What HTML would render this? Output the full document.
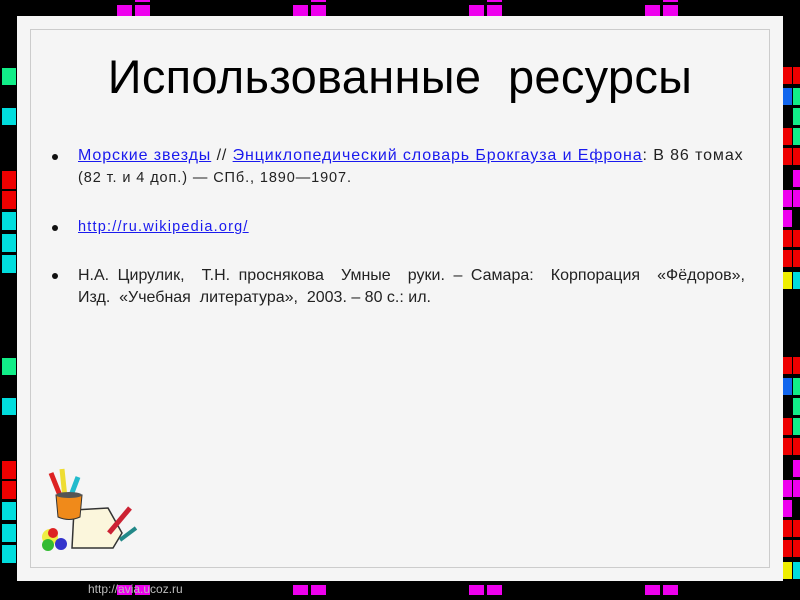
<!DOCTYPE html>
<html><head><meta charset="utf-8"><style>
body{margin:0;width:800px;height:600px;background:#000;position:relative;overflow:hidden;font-family:"Liberation Sans",sans-serif}
.s{position:absolute}
#panel{position:absolute;left:17px;top:16px;width:766px;height:565px;background:#f5f5f5}
#inner{position:absolute;left:30px;top:29px;width:738px;height:537px;border:1px solid #ccc}
h1{position:absolute;left:0;width:800px;top:49px;margin:0;text-align:center;font-weight:normal;font-size:47px;color:#000;letter-spacing:0.3px}
.li{position:absolute;left:78px;width:667px;font-size:16px;color:#222;line-height:22px}
.j{text-align:justify;text-align-last:justify}
.b{position:absolute;left:52px;width:6px;height:6px;border-radius:50%;background:#111}
a{color:#1a1aee;text-decoration:underline}
</style></head><body>
<div id="panel"></div><div id="inner"></div>
<div id="sq"></div>
<h1>Использованные&nbsp; ресурсы</h1>
<div class="b" style="top:154px"></div>
<div class="li" style="top:145px"><div style="letter-spacing:0.9px"><a>Морские звезды</a> // <a>Энциклопедический словарь Брокгауза и Ефрона</a>: В 86 томах</div><div style="font-size:14.5px;letter-spacing:0.9px">(82 т. и 4 доп.) — СПб., 1890—1907.</div></div>
<div class="b" style="top:225px"></div>
<div class="li" style="top:216px;font-size:14.5px;letter-spacing:1.2px"><a>http://ru.wikipedia.org/</a></div>
<div class="b" style="top:273px"></div>
<div class="li" style="top:265px"><div class="j">Н.А. Цирулик,&nbsp; Т.Н. проснякова&nbsp; Умные&nbsp; руки. – Самара:&nbsp; Корпорация&nbsp; «Фёдоров»,</div><div>Изд.&nbsp; «Учебная&nbsp; литература»,&nbsp; 2003. – 80 с.: ил.</div></div>
<svg class="s" style="left:36px;top:465px" width="110" height="100" viewBox="0 0 110 100">
<polygon points="38,45 72,43 86,68 77,83 36,83" fill="#fbf6dc" stroke="#333" stroke-width="1.5"/>
<line x1="15" y1="8" x2="25" y2="33" stroke="#d22" stroke-width="5"/>
<line x1="26" y1="4" x2="29" y2="33" stroke="#ed3" stroke-width="5"/>
<line x1="42" y1="12" x2="34" y2="33" stroke="#2bc" stroke-width="5"/>
<path d="M20,30 L46,30 L44,52 Q33,57 22,52 Z" fill="#f08a1a" stroke="#333"/>
<ellipse cx="33" cy="30" rx="13" ry="3" fill="#555"/>
<line x1="73" y1="68" x2="94" y2="43" stroke="#c23" stroke-width="5"/>
<line x1="84" y1="75" x2="100" y2="63" stroke="#288" stroke-width="4"/>
<circle cx="14" cy="72" r="8" fill="#ee4"/>
<circle cx="17" cy="68" r="5" fill="#d22"/>
<circle cx="12" cy="80" r="6" fill="#3b3"/>
<circle cx="25" cy="79" r="6" fill="#33c"/>
</svg>
<div class="s" style="left:88px;top:582px;font-size:12px;color:#bbb">http://avia.ucoz.ru</div>
<script>
var h='';function sq(x,y,w,hh,c){h+='<div class="s" style="left:'+x+'px;top:'+y+'px;width:'+w+'px;height:'+hh+'px;background:'+c+'"></div>';}
var R='#e00',G='#1e8',C='#0dd',M='#e0e',B='#16e',Y='#ee0';
for(var p=0;p<2;p++){var o=p*290;
[[68,G],[108,C]].forEach(function(a){sq(2,a[0]+o,14,17,a[1]);});
[[171,R],[191,R],[212,C],[234,C],[255,C]].forEach(function(a){if(a[0]+o<575)sq(2,a[0]+o,14,18,a[1]);});
var r=[[67,R,R],[88,B,G],[108,null,G],[128,R,G],[148,R,R],[170,null,M],[190,M,M],[210,M,null],[230,R,R],[250,R,R],[272,Y,C]];
r.forEach(function(a){var y=a[0]+o;if(a[1])sq(783,y,9,17,a[1]);if(a[2])sq(793,y,7,17,a[2]);});}
for(var x=117;x<800;x+=176){sq(x,5,15,11,M);sq(x+18,5,15,11,M);sq(x+18,0,15,2,M);sq(x,585,15,10,M);sq(x+18,585,15,10,M);}
document.getElementById('sq').innerHTML=h;
</script>
</body></html>
